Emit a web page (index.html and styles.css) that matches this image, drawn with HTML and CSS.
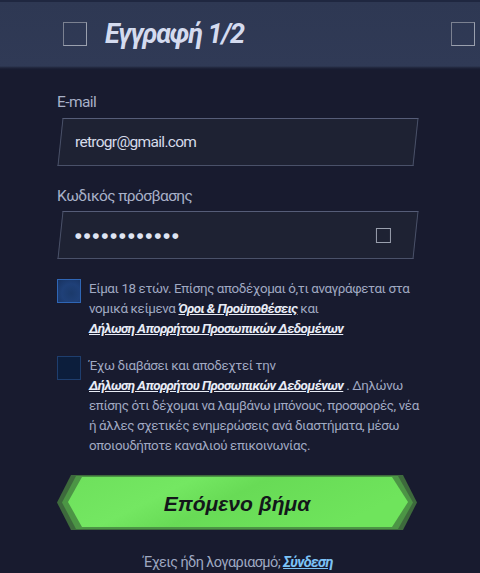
FILE: index.html
```html
<!DOCTYPE html>
<html lang="el">
<head>
<meta charset="utf-8">
<link rel="stylesheet" href="styles.css">
</head>
<body>
<div class="page">
  <header class="header">
    <span class="hbox"></span>
    <h1 class="title">Εγγραφή 1/2</h1>
    <span class="hbox hbox-right"></span>
  </header>

  <form class="form">
    <label class="label">E-mail</label>
    <div class="field">
      <span class="field-value">retrogr@gmail.com</span>
    </div>

    <label class="label label-pass">Κωδικός πρόσβασης</label>
    <div class="field">
      <span class="field-value dots">●●●●●●●●●●●●</span>
      <span class="eye"></span>
    </div>

    <div class="check-row row-first">
      <span class="check check-on"></span>
      <p class="check-text">Είμαι 18 ετών. Επίσης αποδέχομαι ό,τι αναγράφεται στα νομικά κείμενα <a class="legal">Όροι &amp; Προϋποθέσεις</a> και <a class="legal">Δήλωση Απορρήτου Προσωπικών Δεδομένων</a></p>
    </div>

    <div class="check-row row-second">
      <span class="check check-off"></span>
      <p class="check-text">Έχω διαβάσει και αποδεχτεί την <a class="legal">Δήλωση Απορρήτου Προσωπικών Δεδομένων</a> . Δηλώνω επίσης ότι δέχομαι να λαμβάνω μπόνους, προσφορές, νέα ή άλλες σχετικές ενημερώσεις ανά διαστήματα, μέσω οποιουδήποτε καναλιού επικοινωνίας.</p>
    </div>

    <button type="button" class="next">
      <svg class="next-bg" width="360" height="55" viewBox="0 0 360 55">
        <defs>
          <linearGradient id="g" x1="0" y1="0" x2="1" y2="0.3">
            <stop offset="0" stop-color="#6ee05c"/>
            <stop offset="0.35" stop-color="#74e762"/>
            <stop offset="0.55" stop-color="#68db56"/>
            <stop offset="1" stop-color="#6fe45c"/>
          </linearGradient>
        </defs>
        <polygon points="14,0 346,0 360,27.5 346,55 14,55 0,27.5" fill="#3d6a3c"/>
        <polygon points="19,1 341,1 356,27.5 341,54 19,54 5,27.5" fill="#4c9545"/>
        <polygon points="25,2 335,2 351,27 335,52 25,52 11,27" fill="url(#g)"/>
      </svg>
      <span class="next-text">Επόμενο βήμα</span>
    </button>

    <p class="login">Έχεις ήδη λογαριασμό; <a class="login-link">Σύνδεση</a></p>
  </form>
</div>
</body>
</html>
```
FILE: styles.css
```css
* { box-sizing: border-box; }
html, body { margin: 0; padding: 0; }
body {
  background: #181b2f;
  font-family: Roboto, "Noto Sans", sans-serif;
  width: 480px;
  height: 573px;
  overflow: hidden;
}
.page { width: 480px; }

.header {
  height: 70px;
  display: flex;
  align-items: center;
  padding: 0 5px 2px 63px;
  background: linear-gradient(#1f2740 0, #1f2740 2px, #2e3853 2px, #303a56 66px, #1e2339 68px, #161a2e 70px);
}
.hbox {
  width: 24px;
  height: 24px;
  border: 1px solid #9aa0ae;
  border-left-color: #7b8191;
  border-top-color: #7b8191;
  flex: none;
}
.hbox-right { margin-left: auto; }
.title {
  margin: 0 0 0 18px;
  font-family: Roboto, sans-serif;
  font-size: 27px;
  font-weight: 700;
  font-style: italic;
  color: #d4dbef;
  letter-spacing: -1.1px;
}

.form {
  margin: 0 0 0 57px;
  width: 362px;
  padding-top: 22px;
  display: flex;
  flex-direction: column;
}
.label {
  display: block;
  font-size: 15.5px;
  line-height: 20px;
  color: #a8b1c8;
  margin-bottom: 6px;
  letter-spacing: -0.6px;
}
.label-pass { margin-top: 20px; margin-bottom: 5px; }

.field {
  height: 48px;
  margin: 0 3px;
  transform: skewX(-6deg);
  background: #1e2233;
  border: 1px solid #4a5169;
  border-top-color: #565d78;
  display: flex;
  align-items: center;
  padding: 0 14px 0 14px;
}
.field-value {
  transform: skewX(6deg);
  font-size: 15.5px;
  color: #d6dbea;
  letter-spacing: -0.7px;
}
.dots {
  font-family: "DejaVu Sans", sans-serif;
  font-size: 7.6px;
  letter-spacing: 2.2px;
  color: #dfe4f2;
}
.eye {
  margin-left: auto;
  margin-right: 10px;
  width: 15px;
  height: 15px;
  border: 1px solid #9aa0ae;
  transform: skewX(6deg);
}

.check-row {
  display: flex;
  align-items: flex-start;
  gap: 8px;
}
.row-first { margin-top: 20px; }
.row-second { margin-top: 17px; }
.check {
  flex: none;
  width: 24px;
  height: 24px;
}
.check-on {
  background: radial-gradient(circle at 60% 60%, #1b3a6b 0, #1f4078 50%, #173260 100%);
  border: 1.5px solid #2f66b5;
}
.check-off {
  background: #0c1e3c;
  border: 1px solid #1e3e6e;
}
.check-text {
  margin: 0;
  width: 330px;
  font-size: 13.4px;
  line-height: 20px;
  color: #a0a9c2;
  letter-spacing: -0.4px;
}
.legal {
  color: #e8ecf6;
  font-weight: 700;
  font-style: italic;
  text-decoration: underline;
  white-space: nowrap;
  letter-spacing: -0.6px;
}

.next {
  position: relative;
  margin-top: 19px;
  width: 360px;
  height: 55px;
  padding: 0;
  border: 0;
  background: transparent;
  display: flex;
  align-items: center;
  justify-content: center;
}
.next-bg {
  position: absolute;
  left: 0;
  top: 0;
}
.next-text {
  position: relative;
  margin-top: 3px;
  font-family: "Liberation Sans", Arial, sans-serif;
  font-size: 21px;
  font-weight: 700;
  font-style: italic;
  color: #13171a;
}

.login {
  margin: 23px 0 0 0;
  text-align: center;
  font-size: 14.5px;
  line-height: 20px;
  color: #9ea8c1;
  letter-spacing: -0.6px;
}
.login-link {
  color: #7cc2f6;
  font-weight: 700;
  font-style: italic;
  text-decoration: underline;
  letter-spacing: -0.7px;
}
```
